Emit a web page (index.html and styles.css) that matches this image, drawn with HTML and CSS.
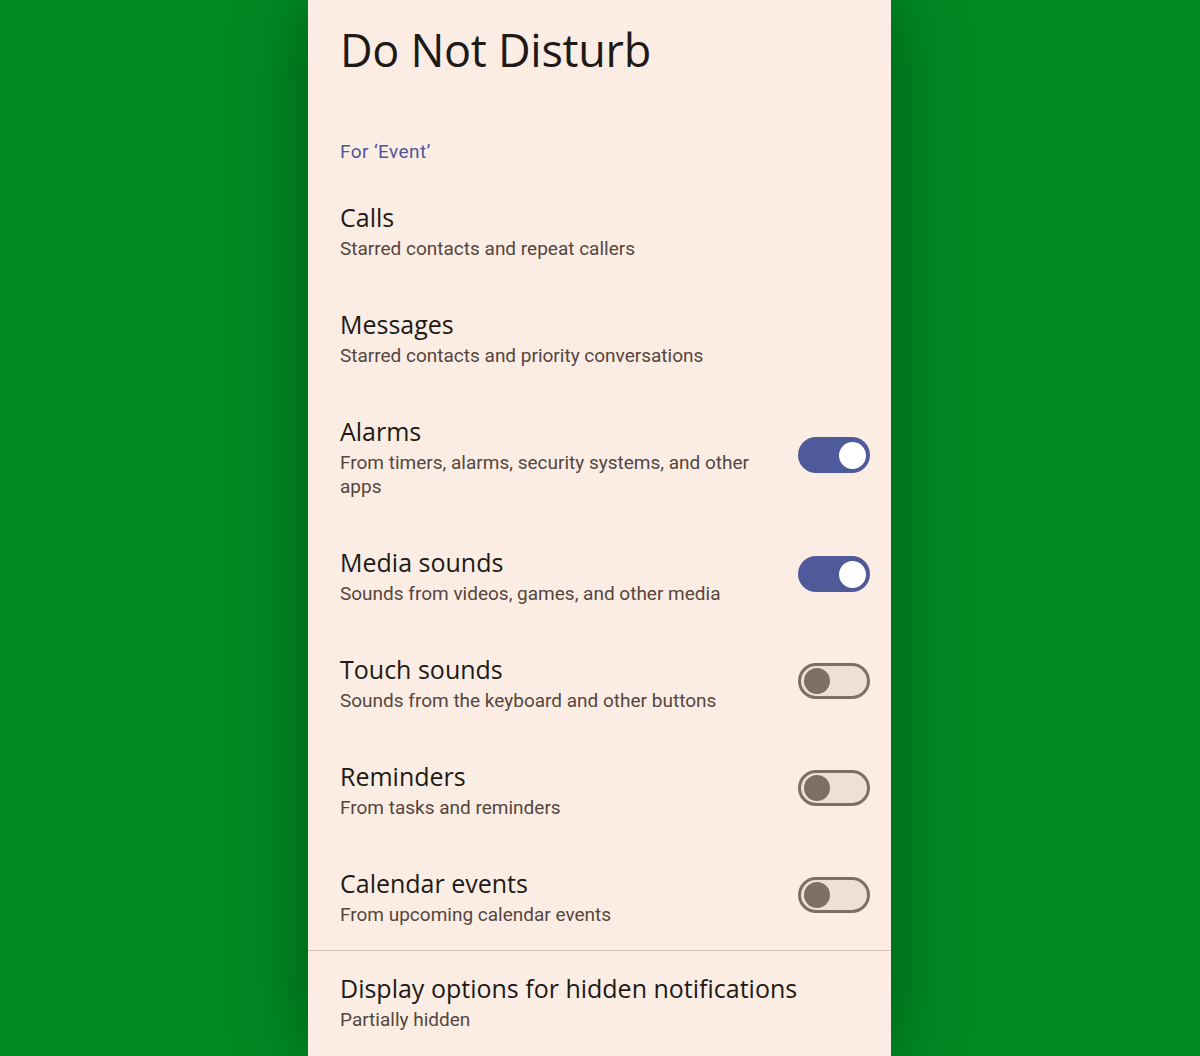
FILE: index.html
```html
<!DOCTYPE html>
<html>
<head>
<meta charset="utf-8">
<link rel="stylesheet" href="styles.css">
</head>
<body>
<div class="stage">
  <div class="panel">
    <h1 class="title">Do Not Disturb</h1>
    <div class="category">For ‘Event’</div>
    <div class="item">
      <div class="text">
        <div class="item-title">Calls</div>
        <div class="item-sub">Starred contacts and repeat callers</div>
      </div>
    </div>
    <div class="item">
      <div class="text">
        <div class="item-title">Messages</div>
        <div class="item-sub">Starred contacts and priority conversations</div>
      </div>
    </div>
    <div class="item">
      <div class="text">
        <div class="item-title">Alarms</div>
        <div class="item-sub">From timers, alarms, security systems, and other apps</div>
      </div>
      <div class="switch on"><span class="thumb"></span></div>
    </div>
    <div class="item">
      <div class="text">
        <div class="item-title">Media sounds</div>
        <div class="item-sub">Sounds from videos, games, and other media</div>
      </div>
      <div class="switch on"><span class="thumb"></span></div>
    </div>
    <div class="item">
      <div class="text">
        <div class="item-title">Touch sounds</div>
        <div class="item-sub">Sounds from the keyboard and other buttons</div>
      </div>
      <div class="switch off"><span class="thumb"></span></div>
    </div>
    <div class="item">
      <div class="text">
        <div class="item-title">Reminders</div>
        <div class="item-sub">From tasks and reminders</div>
      </div>
      <div class="switch off"><span class="thumb"></span></div>
    </div>
    <div class="item">
      <div class="text">
        <div class="item-title">Calendar events</div>
        <div class="item-sub">From upcoming calendar events</div>
      </div>
      <div class="switch off"><span class="thumb"></span></div>
    </div>
    <div class="divider"></div>
    <div class="item last">
      <div class="text">
        <div class="item-title">Display options for hidden notifications</div>
        <div class="item-sub">Partially hidden</div>
      </div>
    </div>
  </div>
</div>
</body>
</html>
```
FILE: styles.css
```css
* { box-sizing: border-box; }
html, body { margin: 0; padding: 0; }
body {
  width: 1200px;
  height: 1056px;
  overflow: hidden;
  background: #008a24;
  font-family: Roboto, "Liberation Sans", sans-serif;
}
.stage {
  display: flex;
  justify-content: center;
  height: 1056px;
}
.panel {
  width: 583px;
  margin-left: -1px;
  height: 1056px;
  background: #fcede4;
  box-shadow: 0 0 70px rgba(0, 30, 0, 0.45);
  padding: 0 21px 0 32px;
  display: flex;
  flex-direction: column;
}
.panel > * { flex: none; }
.title {
  margin: 0;
  padding-top: 22px;
  font-family: "Open Sans", Roboto, sans-serif;
  font-weight: 400;
  font-size: 45px;
  line-height: 56px;
  letter-spacing: -0.3px;
  color: #201a17;
}
.category {
  margin-top: 62px;
  margin-bottom: 14px;
  font-size: 19px;
  line-height: 24px;
  color: #4d5799;
  font-weight: 400;
  letter-spacing: 0.4px;
}
.item {
  display: flex;
  align-items: center;
  gap: 24px;
  padding: 19px 0 24px;
}
.text { flex: 1; min-width: 0; }
.item-title {
  font-family: "Open Sans", Roboto, sans-serif;
  font-size: 25px;
  line-height: 40px;
  color: #201a17;
}
.item-sub {
  font-size: 19px;
  line-height: 24px;
  color: #54463e;
}
.switch {
  flex: none;
  width: 72px;
  height: 36px;
  border-radius: 18px;
  display: flex;
  align-items: center;
  padding: 0 4px;
}
.switch.on {
  background: #4f5a9a;
  justify-content: flex-end;
}
.switch.on .thumb {
  width: 27px;
  height: 27px;
  border-radius: 50%;
  background: #ffffff;
}
.switch.off {
  background: #efdfd4;
  border: 3px solid #7f6e64;
  padding: 0 3px;
}
.switch.off .thumb {
  width: 26px;
  height: 26px;
  border-radius: 50%;
  background: #7f6e64;
}
.divider {
  height: 1px;
  background: #d5c6bd;
  margin: -1px -21px 0 -32px;
}
.item.last { padding-top: 17px; }
```
